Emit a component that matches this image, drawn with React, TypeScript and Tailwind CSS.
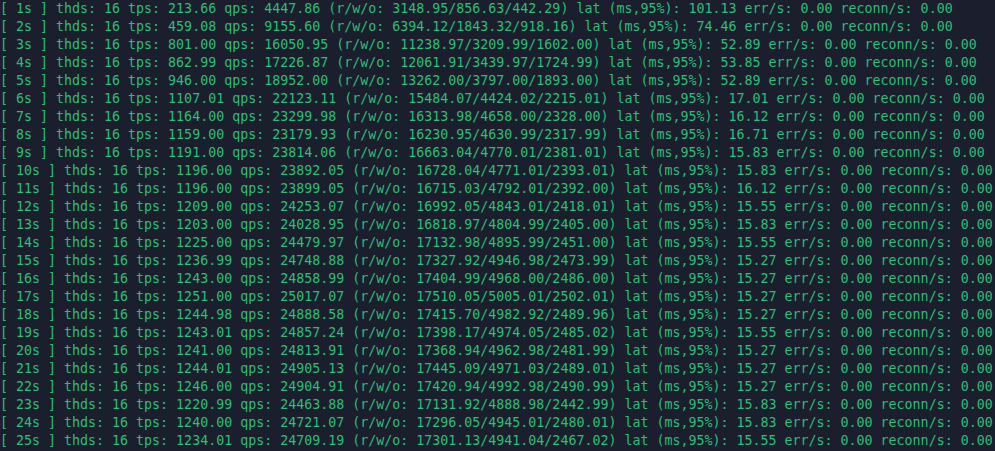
const lines = [
  "[ 1s ] thds: 16 tps: 213.66 qps: 4447.86 (r/w/o: 3148.95/856.63/442.29) lat (ms,95%): 101.13 err/s: 0.00 reconn/s: 0.00",
  "[ 2s ] thds: 16 tps: 459.08 qps: 9155.60 (r/w/o: 6394.12/1843.32/918.16) lat (ms,95%): 74.46 err/s: 0.00 reconn/s: 0.00",
  "[ 3s ] thds: 16 tps: 801.00 qps: 16050.95 (r/w/o: 11238.97/3209.99/1602.00) lat (ms,95%): 52.89 err/s: 0.00 reconn/s: 0.00",
  "[ 4s ] thds: 16 tps: 862.99 qps: 17226.87 (r/w/o: 12061.91/3439.97/1724.99) lat (ms,95%): 53.85 err/s: 0.00 reconn/s: 0.00",
  "[ 5s ] thds: 16 tps: 946.00 qps: 18952.00 (r/w/o: 13262.00/3797.00/1893.00) lat (ms,95%): 52.89 err/s: 0.00 reconn/s: 0.00",
  "[ 6s ] thds: 16 tps: 1107.01 qps: 22123.11 (r/w/o: 15484.07/4424.02/2215.01) lat (ms,95%): 17.01 err/s: 0.00 reconn/s: 0.00",
  "[ 7s ] thds: 16 tps: 1164.00 qps: 23299.98 (r/w/o: 16313.98/4658.00/2328.00) lat (ms,95%): 16.12 err/s: 0.00 reconn/s: 0.00",
  "[ 8s ] thds: 16 tps: 1159.00 qps: 23179.93 (r/w/o: 16230.95/4630.99/2317.99) lat (ms,95%): 16.71 err/s: 0.00 reconn/s: 0.00",
  "[ 9s ] thds: 16 tps: 1191.00 qps: 23814.06 (r/w/o: 16663.04/4770.01/2381.01) lat (ms,95%): 15.83 err/s: 0.00 reconn/s: 0.00",
  "[ 10s ] thds: 16 tps: 1196.00 qps: 23892.05 (r/w/o: 16728.04/4771.01/2393.01) lat (ms,95%): 15.83 err/s: 0.00 reconn/s: 0.00",
  "[ 11s ] thds: 16 tps: 1196.00 qps: 23899.05 (r/w/o: 16715.03/4792.01/2392.00) lat (ms,95%): 16.12 err/s: 0.00 reconn/s: 0.00",
  "[ 12s ] thds: 16 tps: 1209.00 qps: 24253.07 (r/w/o: 16992.05/4843.01/2418.01) lat (ms,95%): 15.55 err/s: 0.00 reconn/s: 0.00",
  "[ 13s ] thds: 16 tps: 1203.00 qps: 24028.95 (r/w/o: 16818.97/4804.99/2405.00) lat (ms,95%): 15.83 err/s: 0.00 reconn/s: 0.00",
  "[ 14s ] thds: 16 tps: 1225.00 qps: 24479.97 (r/w/o: 17132.98/4895.99/2451.00) lat (ms,95%): 15.55 err/s: 0.00 reconn/s: 0.00",
  "[ 15s ] thds: 16 tps: 1236.99 qps: 24748.88 (r/w/o: 17327.92/4946.98/2473.99) lat (ms,95%): 15.27 err/s: 0.00 reconn/s: 0.00",
  "[ 16s ] thds: 16 tps: 1243.00 qps: 24858.99 (r/w/o: 17404.99/4968.00/2486.00) lat (ms,95%): 15.27 err/s: 0.00 reconn/s: 0.00",
  "[ 17s ] thds: 16 tps: 1251.00 qps: 25017.07 (r/w/o: 17510.05/5005.01/2502.01) lat (ms,95%): 15.27 err/s: 0.00 reconn/s: 0.00",
  "[ 18s ] thds: 16 tps: 1244.98 qps: 24888.58 (r/w/o: 17415.70/4982.92/2489.96) lat (ms,95%): 15.27 err/s: 0.00 reconn/s: 0.00",
  "[ 19s ] thds: 16 tps: 1243.01 qps: 24857.24 (r/w/o: 17398.17/4974.05/2485.02) lat (ms,95%): 15.55 err/s: 0.00 reconn/s: 0.00",
  "[ 20s ] thds: 16 tps: 1241.00 qps: 24813.91 (r/w/o: 17368.94/4962.98/2481.99) lat (ms,95%): 15.27 err/s: 0.00 reconn/s: 0.00",
  "[ 21s ] thds: 16 tps: 1244.01 qps: 24905.13 (r/w/o: 17445.09/4971.03/2489.01) lat (ms,95%): 15.27 err/s: 0.00 reconn/s: 0.00",
  "[ 22s ] thds: 16 tps: 1246.00 qps: 24904.91 (r/w/o: 17420.94/4992.98/2490.99) lat (ms,95%): 15.27 err/s: 0.00 reconn/s: 0.00",
  "[ 23s ] thds: 16 tps: 1220.99 qps: 24463.88 (r/w/o: 17131.92/4888.98/2442.99) lat (ms,95%): 15.83 err/s: 0.00 reconn/s: 0.00",
  "[ 24s ] thds: 16 tps: 1240.00 qps: 24721.07 (r/w/o: 17296.05/4945.01/2480.01) lat (ms,95%): 15.83 err/s: 0.00 reconn/s: 0.00",
  "[ 25s ] thds: 16 tps: 1234.01 qps: 24709.19 (r/w/o: 17301.13/4941.04/2467.02) lat (ms,95%): 15.55 err/s: 0.00 reconn/s: 0.00",
];

export default function App() {
  return (
    <div className="w-[995px] h-[451px] overflow-hidden bg-[#1b1e2d]">
      <pre className="m-0 font-['DejaVu_Sans_Mono',monospace] text-[13.3px] leading-[18px] text-[#2cbf78]">
        {lines.map((l, i) => (
          <div key={i}>{l}</div>
        ))}
      </pre>
    </div>
  );
}
